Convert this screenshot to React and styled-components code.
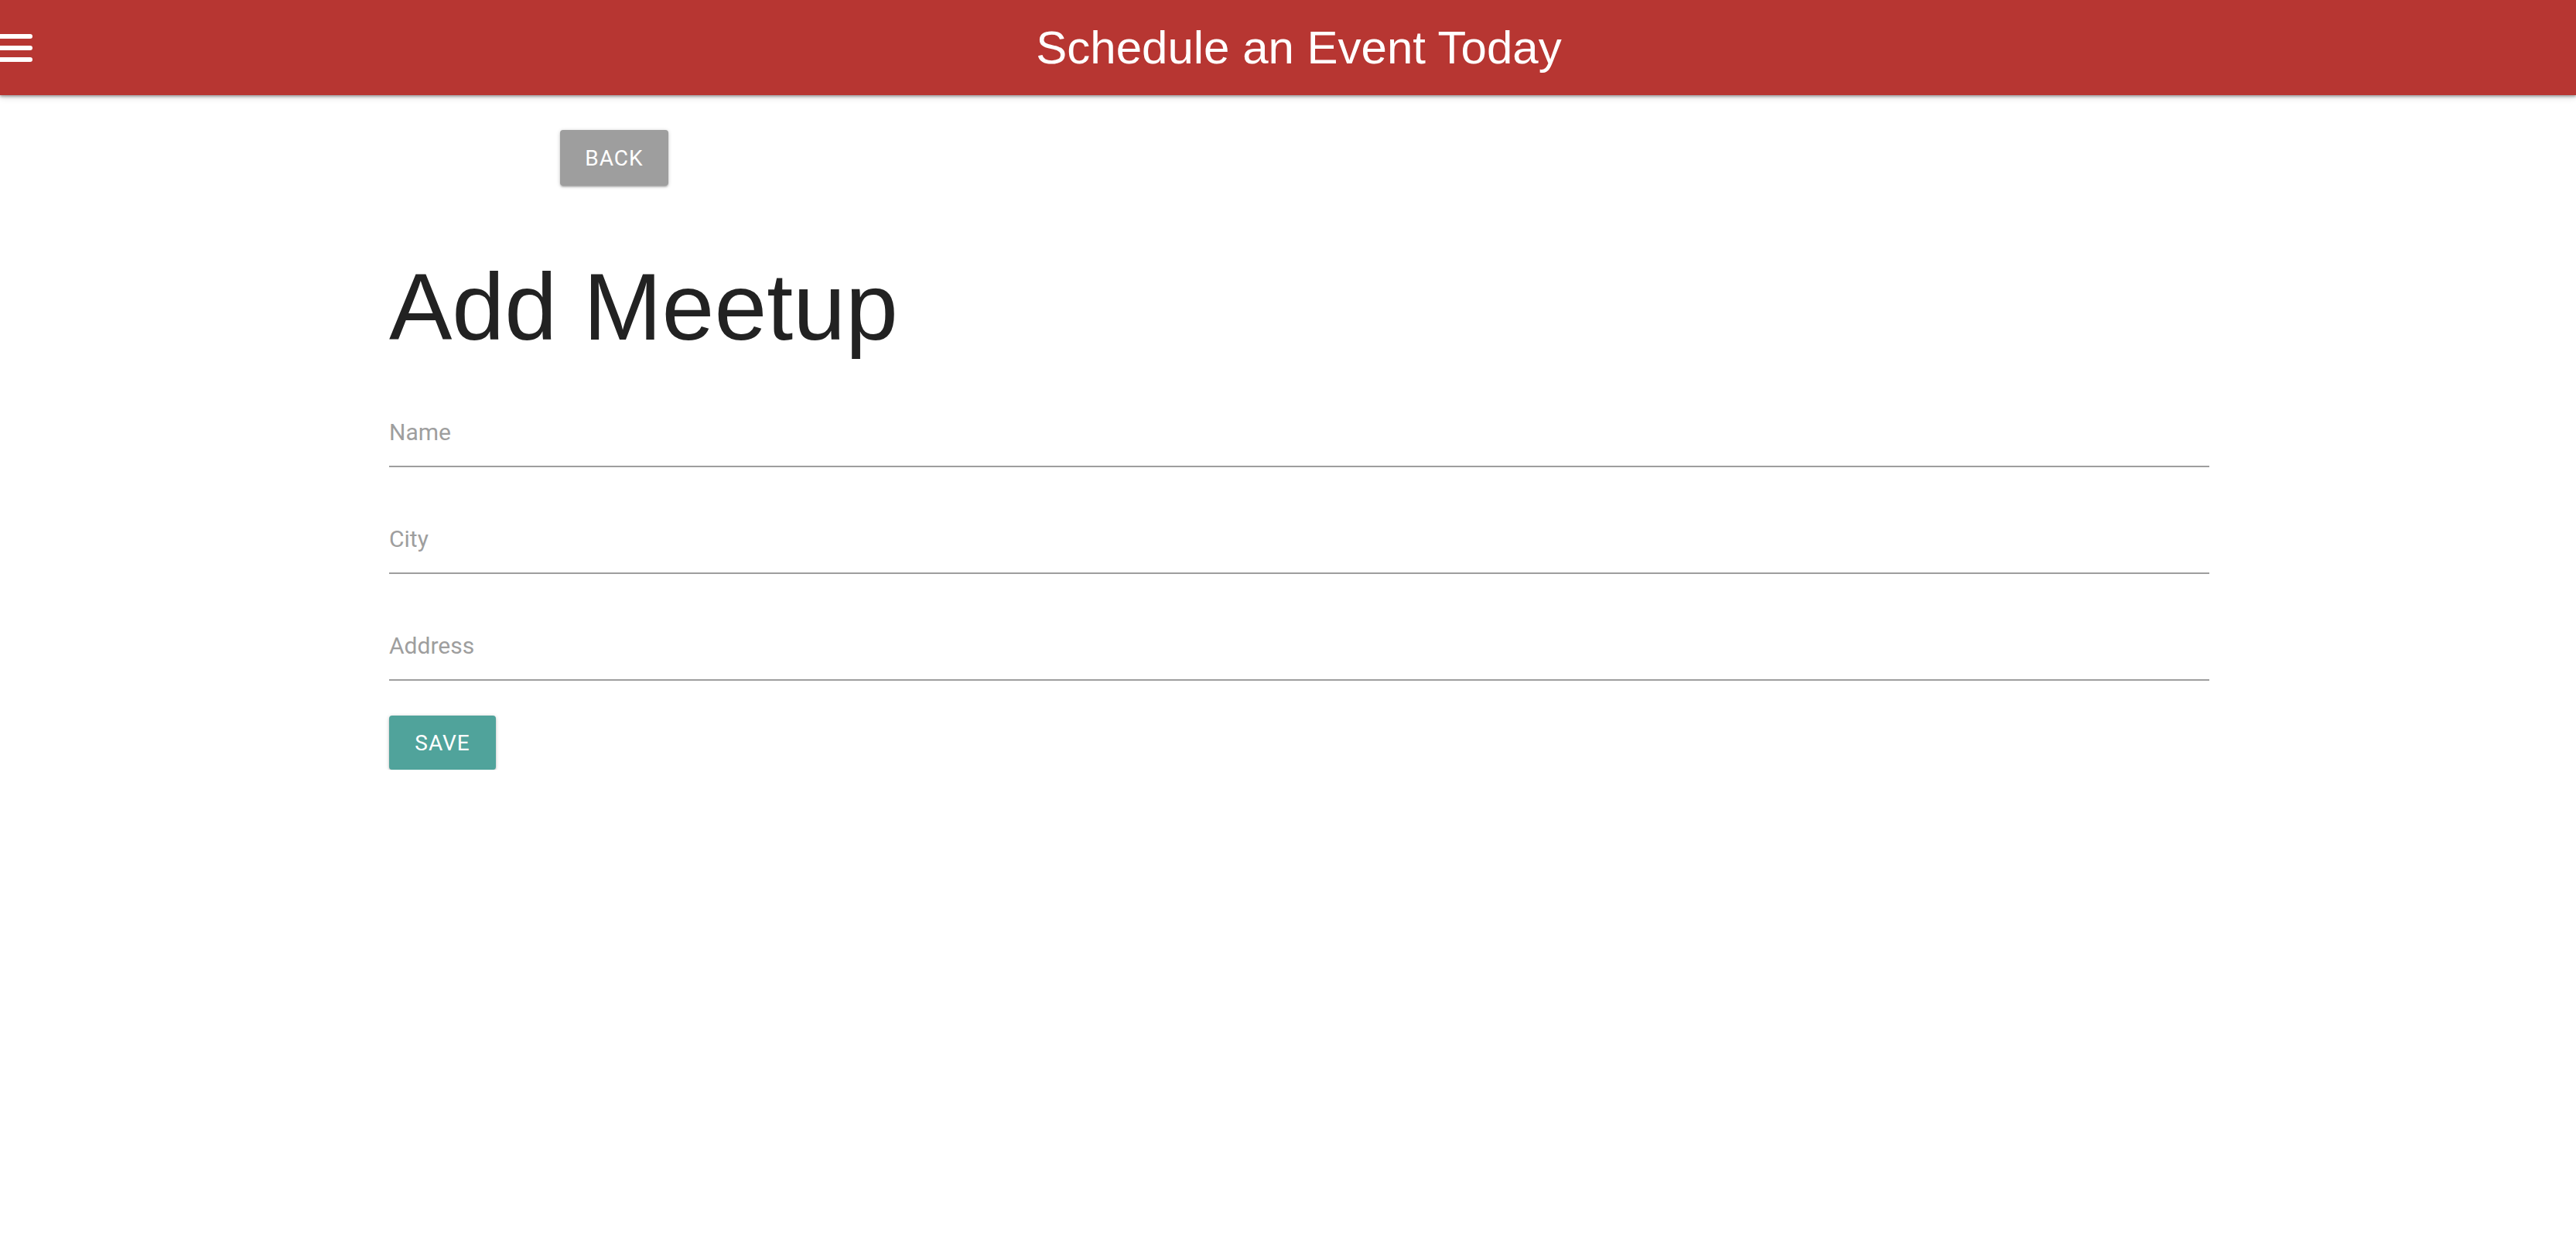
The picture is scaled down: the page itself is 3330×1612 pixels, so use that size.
import React from "react";
import styled, { createGlobalStyle } from "styled-components";

const GlobalStyle = createGlobalStyle`
  html, body {
    margin: 0;
    padding: 0;
    background: #ffffff;
    font-family: "Liberation Sans", Arial, sans-serif;
  }
  * { box-sizing: border-box; }
`;

const Nav = styled.nav`
  height: 123px;
  background: #b73632;
  box-shadow: 0 2px 3px rgba(0, 0, 0, 0.3), 0 3px 8px rgba(0, 0, 0, 0.14);
  display: grid;
  grid-template-columns: 1fr auto 1fr;
  align-items: center;
  position: relative;
  z-index: 1;
`;

const MenuButton = styled.button`
  justify-self: start;
  background: none;
  border: none;
  padding: 0;
  margin: 0;
  width: 42px;
  height: 42px;
  display: flex;
  cursor: pointer;
`;

const Title = styled.h1`
  margin: 0 0 0 28px;
  color: #ffffff;
  font-family: "Liberation Sans", Arial, sans-serif;
  font-weight: 400;
  font-size: 60px;
  line-height: 123px;
  white-space: nowrap;
`;

const Main = styled.main`
  width: 2353px;
  margin-left: 503px;
  display: flex;
  flex-direction: column;
  align-items: flex-start;
`;

const BackRow = styled.div`
  padding: 45px 0 0 221px;
`;

const Button = styled.button`
  height: ${(p) => p.$h}px;
  width: ${(p) => p.$w}px;
  border: none;
  border-radius: 4px;
  background: ${(p) => p.$bg};
  color: #ffffff;
  font-family: Roboto, "Liberation Sans", sans-serif;
  font-size: 28px;
  font-weight: 400;
  letter-spacing: 1px;
  text-transform: uppercase;
  display: flex;
  align-items: center;
  justify-content: center;
  box-shadow: 0 2px 2px rgba(0, 0, 0, 0.14), 0 3px 1px -2px rgba(0, 0, 0, 0.12),
    0 1px 5px rgba(0, 0, 0, 0.2);
  cursor: pointer;
`;

const Heading = styled.h2`
  margin: 90px 0 0 0;
  font-family: "Liberation Sans", Arial, sans-serif;
  font-weight: 400;
  font-size: 122px;
  line-height: 134px;
  color: #222222;
`;

const Form = styled.form`
  width: 100%;
  display: flex;
  flex-direction: column;
  align-items: flex-start;
  margin-top: 50px;
`;

const Field = styled.input`
  width: 100%;
  height: 90px;
  margin: 0 0 48px 0;
  padding: 0;
  border: none;
  border-bottom: 2px solid #9e9e9e;
  outline: none;
  background: transparent;
  font-family: Roboto, "Liberation Sans", sans-serif;
  font-size: 30px;
  color: #222;
  &::placeholder {
    color: #9e9e9e;
  }
  &:last-of-type {
    margin-bottom: 45px;
  }
`;

function MenuIcon() {
  return (
    <svg width="42" height="42" viewBox="0 0 42 42">
      <rect x="-3" y="3" width="45" height="6" rx="3" fill="#fff" />
      <rect x="-3" y="18" width="45" height="6" rx="3" fill="#fff" />
      <rect x="-3" y="33" width="45" height="6" rx="3" fill="#fff" />
    </svg>
  );
}

export default function App() {
  return (
    <>
      <GlobalStyle />
      <Nav>
        <MenuButton aria-label="menu">
          <MenuIcon />
        </MenuButton>
        <Title>Schedule an Event Today</Title>
        <div />
      </Nav>
      <Main>
        <BackRow>
          <Button type="button" $w={140} $h={72} $bg="#9e9e9e">Back</Button>
        </BackRow>
        <Heading>Add Meetup</Heading>
        <Form onSubmit={(e) => e.preventDefault()}>
          <Field type="text" placeholder="Name" />
          <Field type="text" placeholder="City" />
          <Field type="text" placeholder="Address" />
          <Button type="submit" $w={138} $h={70} $bg="#50a39b">Save</Button>
        </Form>
      </Main>
    </>
  );
}
